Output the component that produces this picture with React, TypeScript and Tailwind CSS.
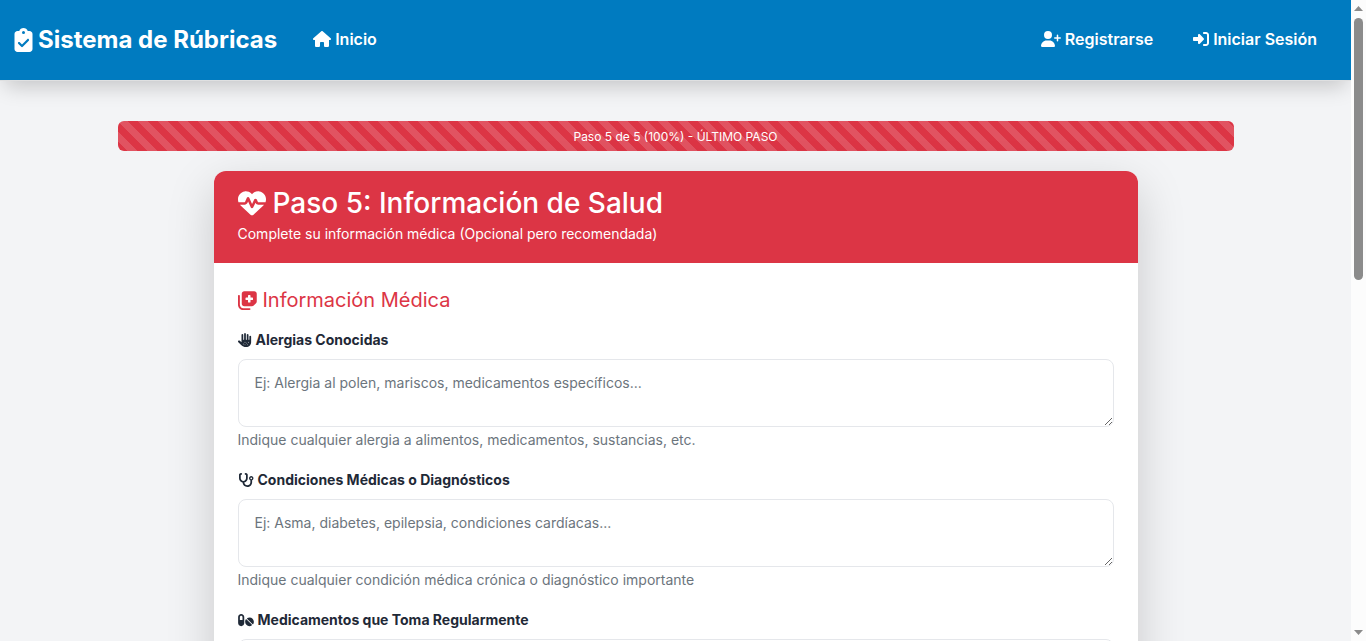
import { useId } from "react";
import type { IconType } from "react-icons";
import {
  FaClipboardCheck,
  FaHandDots,
  FaHeartPulse,
  FaHouse,
  FaNotesMedical,
  FaPills,
  FaRightToBracket,
  FaStethoscope,
  FaUserPlus,
} from "react-icons/fa6";

type HealthField = {
  icon: IconType;
  iconClass: string;
  label: string;
  placeholder: string;
  help: string;
};

const fields: HealthField[] = [
  {
    icon: FaHandDots,
    iconClass: "h-3.5 w-3.5",
    label: "Alergias Conocidas",
    placeholder: "Ej: Alergia al polen, mariscos, medicamentos específicos...",
    help: "Indique cualquier alergia a alimentos, medicamentos, sustancias, etc.",
  },
  {
    icon: FaStethoscope,
    iconClass: "h-3.5 w-4",
    label: "Condiciones Médicas o Diagnósticos",
    placeholder: "Ej: Asma, diabetes, epilepsia, condiciones cardíacas...",
    help: "Indique cualquier condición médica crónica o diagnóstico importante",
  },
  {
    icon: FaPills,
    iconClass: "h-3.5 w-4",
    label: "Medicamentos que Toma Regularmente",
    placeholder: "",
    help: "",
  },
];

function NavLink({ icon: Icon, iconClass, label }: { icon: IconType; iconClass: string; label: string }) {
  return (
    <a href="#" className="flex items-center gap-1 px-5 text-base font-semibold text-white">
      <Icon className={iconClass} aria-hidden="true" />
      {label}
    </a>
  );
}

function Navbar() {
  return (
    <header className="relative z-10 flex h-[81px] items-center border-b border-[#dfe0e1] bg-[#007bc0] bg-clip-padding pr-3.5 pl-3.5 text-white shadow-[0_10px_20px_-5px_rgba(0,0,0,0.2)]">
      <a href="#" className="flex items-center gap-[5px] text-2xl font-bold">
        <FaClipboardCheck className="h-6 w-[19px]" aria-hidden="true" />
        Sistema de Rúbricas
      </a>
      <nav className="ml-4 flex flex-1 items-center justify-between pb-0.5" aria-label="Principal">
        <NavLink icon={FaHouse} iconClass="h-4 w-[18px]" label="Inicio" />
        <div className="flex">
          <NavLink icon={FaUserPlus} iconClass="h-4 w-5" label="Registrarse" />
          <NavLink icon={FaRightToBracket} iconClass="h-4 w-4" label="Iniciar Sesión" />
        </div>
      </nav>
    </header>
  );
}

function Progress() {
  return (
    <div
      role="progressbar"
      aria-valuenow={100}
      aria-valuemin={0}
      aria-valuemax={100}
      className="flex h-[30px] items-center justify-center rounded-md bg-[#dc3545] bg-[linear-gradient(45deg,rgba(255,255,255,0.15)_25%,transparent_25%,transparent_50%,rgba(255,255,255,0.15)_50%,rgba(255,255,255,0.15)_75%,transparent_75%,transparent)] bg-[length:20px_20px] pt-0.5 text-xs text-white"
    >
      Paso 5 de 5 (100%) - ÚLTIMO PASO
    </div>
  );
}

function Field({ icon: Icon, iconClass, label, placeholder, help }: HealthField) {
  const id = useId();
  return (
    <div className="mb-[18px]">
      <label htmlFor={id} className="mb-[7px] flex h-6 items-center gap-1 text-sm font-bold text-[#1f2937]">
        <Icon className={iconClass} aria-hidden="true" />
        {label}
      </label>
      <textarea
        id={id}
        placeholder={placeholder}
        className="block h-[68px] w-full resize-y rounded-lg border border-[#e5e7eb] px-4 py-[13px] text-sm text-[#1f2937] placeholder:text-[#6c757d]"
      />
      <p className="mt-[3px] text-sm text-[#6c757d]">{help}</p>
    </div>
  );
}

function Scrollbar() {
  return (
    <div className="flex w-[15px] shrink-0 flex-col items-center bg-[#fcfcfc] py-1.5" aria-hidden="true">
      <svg width="9" height="5" viewBox="0 0 9 5" fill="#8b8b8b">
        <path d="M4.5 0 9 5H0z" />
      </svg>
      <div className="mt-[7px] h-[262px] w-[9px] rounded-full bg-[#8b8b8b]" />
      <svg className="mt-auto" width="9" height="5" viewBox="0 0 9 5" fill="#8b8b8b">
        <path d="M4.5 5 9 0H0z" />
      </svg>
    </div>
  );
}

export default function App() {
  return (
    <div className="flex h-screen bg-[#f3f4f6] font-['Inter',sans-serif]">
      <div className="min-w-0 flex-1 overflow-y-auto [scrollbar-width:none]">
        <Navbar />
        <main className="mx-auto max-w-[1140px] px-3 pt-10">
          <Progress />
          <section className="mx-auto mt-5 max-w-[924px] rounded-xl bg-white shadow-[0_16px_48px_rgba(0,0,0,0.175)]">
            <div className="h-[92px] rounded-t-xl bg-[#dc3545] px-6 pt-4 text-white">
              <h1 className="flex items-center gap-[7px] text-[28px] leading-8 font-medium">
                <FaHeartPulse className="h-7 w-7" aria-hidden="true" />
                Paso 5: Información de Salud
              </h1>
              <p className="mt-[5px] text-sm">Complete su información médica (Opcional pero recomendada)</p>
            </div>
            <form className="px-6 pt-[25px] pb-6">
              <h2 className="mb-4 flex items-center gap-[5px] text-xl leading-6 text-[#dc3545]">
                <FaNotesMedical className="h-5 w-5" aria-hidden="true" />
                Información Médica
              </h2>
              {fields.map((field) => (
                <Field key={field.label} {...field} />
              ))}
            </form>
          </section>
        </main>
      </div>
      <Scrollbar />
    </div>
  );
}
